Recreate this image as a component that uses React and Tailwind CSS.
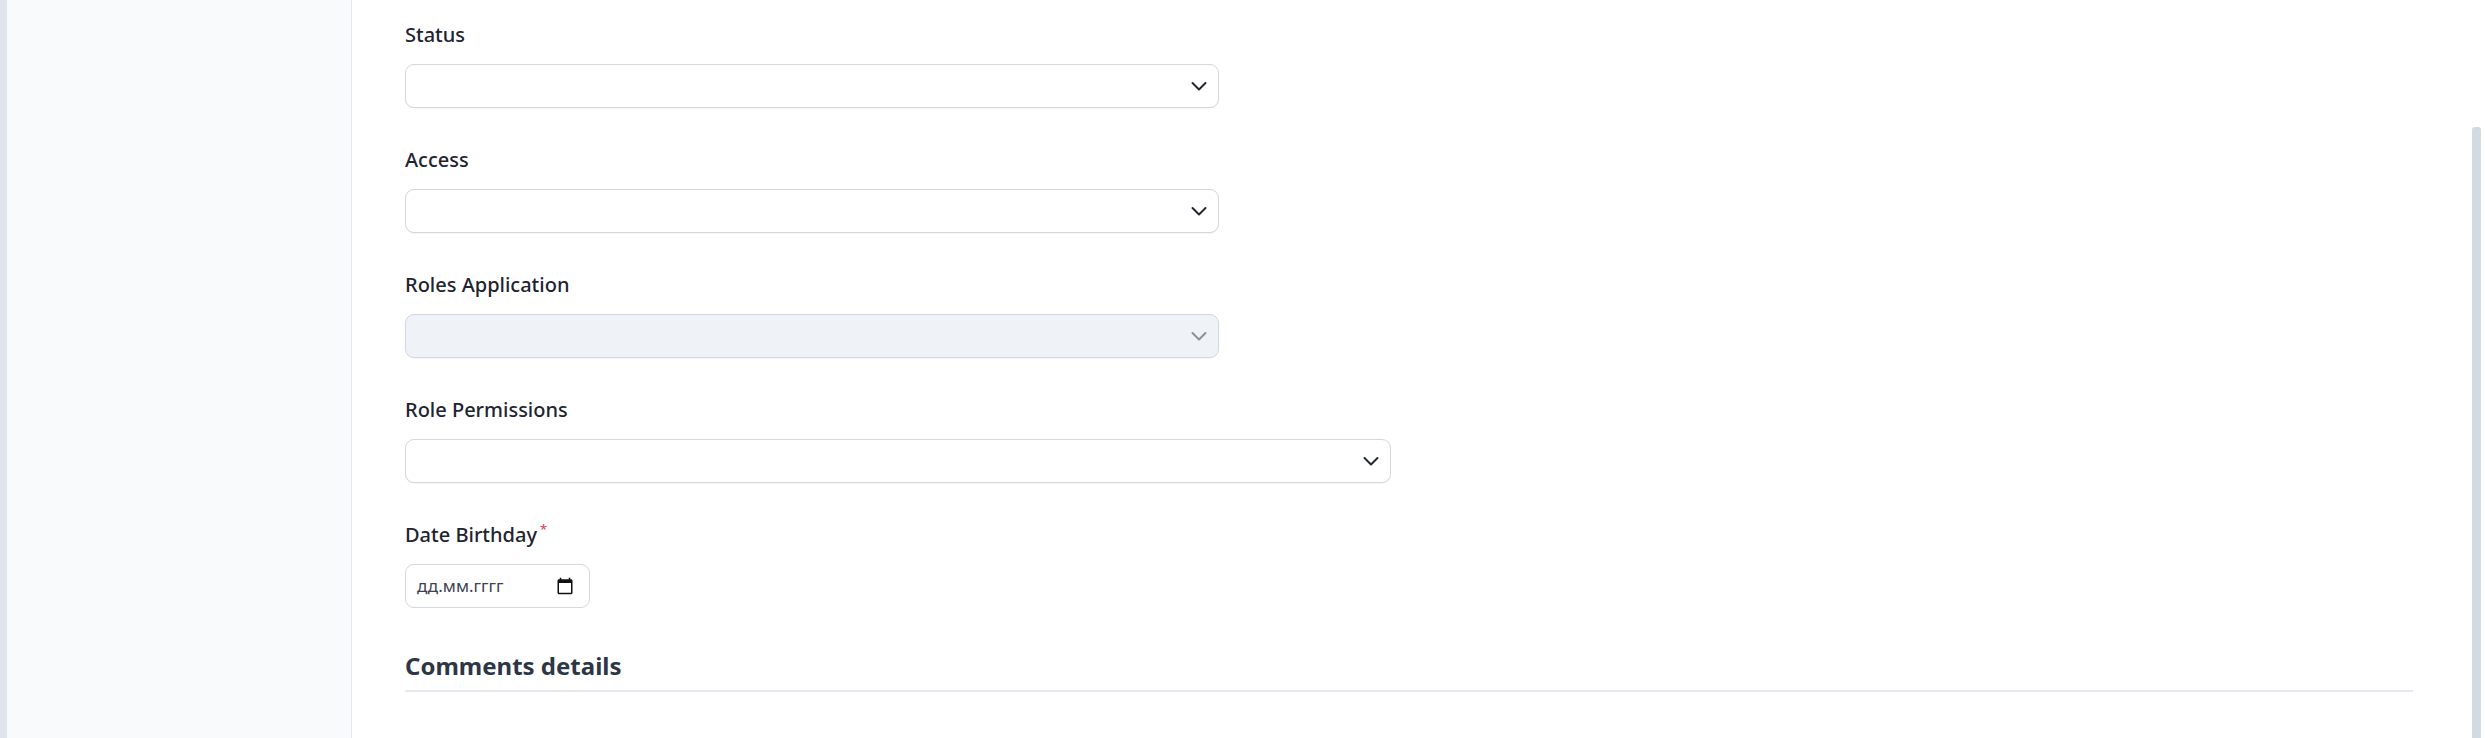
function Chevron({ muted }) {
  return (
    <svg width="16" height="16" viewBox="0 0 16 16" fill="none" className="shrink-0">
      <path
        d="M1.5 5l6.5 6.5L14.5 5"
        stroke={muted ? '#8a8f98' : '#222831'}
        strokeWidth="2"
        strokeLinecap="round"
        strokeLinejoin="round"
      />
    </svg>
  );
}

function CalendarIcon() {
  return (
    <svg width="18" height="18" viewBox="0 0 24 24" fill="#111">
      <path d="M20 3h-1V1h-2v2H7V1H5v2H4c-1.1 0-2 .9-2 2v16c0 1.1.9 2 2 2h16c1.1 0 2-.9 2-2V5c0-1.1-.9-2-2-2zm0 18H4V8h16v13z" />
    </svg>
  );
}

function Field({ label, required, children }) {
  return (
    <div className="flex flex-col">
      <label className="h-[30px] text-[20px] leading-[30px] font-medium text-[#1e2430]">
        {label}
        {required && <span className="ml-[3px] align-top text-[13px] leading-[18px] text-[#e0475a]">*</span>}
      </label>
      <div className="mt-[14px]">{children}</div>
    </div>
  );
}

function SelectBox({ width, disabled }) {
  return (
    <div
      className={`flex h-[44px] items-center justify-end rounded-[9px] border border-[#d3d7de] pr-[11px] shadow-[0_1px_1px_rgba(0,0,0,0.04)] ${
        disabled ? 'bg-[#eff2f7]' : 'bg-white'
      }`}
      style={{ width }}
    >
      <Chevron muted={disabled} />
    </div>
  );
}

export default function App() {
  return (
    <div className="flex h-[738px] w-full overflow-hidden bg-white font-['Noto_Sans',sans-serif]">
      <div className="w-[7px] shrink-0 bg-[#dee5ed]" />
      <aside className="w-[345px] shrink-0 border-r border-[#e3e8ee] bg-[#f8fafc]" />

      <main className="flex-1 pl-[53px] pr-[59px] pt-[20px]">
        <div className="flex flex-col gap-[37px]">
          <Field label="Status">
            <SelectBox width={814} />
          </Field>
          <Field label="Access">
            <SelectBox width={814} />
          </Field>
          <Field label="Roles Application">
            <SelectBox width={814} disabled />
          </Field>
          <Field label="Role Permissions">
            <SelectBox width={986} />
          </Field>
          <Field label="Date Birthday" required>
            <div className="flex h-[44px] w-[185px] items-center justify-between rounded-[9px] border border-[#d3d7de] bg-white pl-[11px] pr-[15px]">
              <span className="text-[17px] text-[#3b4250]">дд.мм.гггг</span>
              <CalendarIcon />
            </div>
          </Field>
        </div>

        <h2 className="mt-[42px] border-b-2 border-[#e5e9ef] pb-[8px] text-[24px] leading-[32px] font-bold text-[#2d3646]">
          Comments details
        </h2>
      </main>

      <div className="w-[13px] shrink-0 pt-[127px]">
        <div className="h-full w-[9px] rounded-t-[3px] bg-[#d2dae2]" />
      </div>
    </div>
  );
}
